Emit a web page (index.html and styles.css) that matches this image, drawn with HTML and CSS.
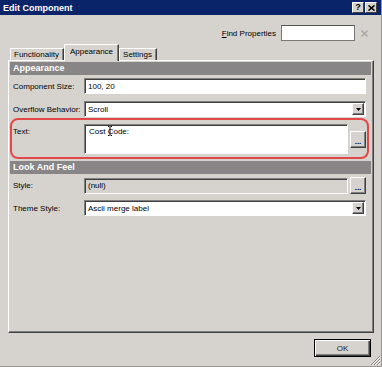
FILE: index.html
```html
<!DOCTYPE html>
<html lang="en">
<head>
  <meta charset="UTF-8" />
  <title>Edit Component</title>
  <link rel="stylesheet" href="styles.css">
</head>
<body>
  <div class="window">
    <div class="titlebar">
      <span class="title">Edit Component</span>
      <div class="caption-btns">
        <span class="cap-btn">?</span>
        <span class="cap-btn">
          <svg width="7" height="6" viewBox="0 0 7 6"><path d="M0.5 0.5 L6.5 5.5 M6.5 0.5 L0.5 5.5" stroke="#000" stroke-width="1.6"/></svg>
        </span>
      </div>
    </div>

    <div class="find-row">
      <span class="find-label"><u>F</u>ind Properties</span>
      <div class="find-input"></div>
      <svg class="find-clear" width="7" height="7" viewBox="0 0 7 7"><path d="M0.5 0.5 L6.5 6.5 M6.5 0.5 L0.5 6.5" stroke="#a9a6a2" stroke-width="1.4"/></svg>
    </div>

    <div class="tabs">
      <div class="tab">Functionality</div>
      <div class="tab active">Appearance</div>
      <div class="tab">Settings</div>
    </div>

    <div class="panel">
      <div class="group-head">Appearance</div>

      <div class="prop first">
        <span class="prop-label">Component Size:</span>
        <div class="field">100, 20</div>
      </div>

      <div class="prop second">
        <span class="prop-label">Overflow Behavior:</span>
        <div class="field combo">
          <span class="combo-text">Scroll</span>
          <span class="drop-btn"><svg width="5" height="3" viewBox="0 0 5 3"><path d="M0 0 H5 L2.5 3 Z" fill="#000"/></svg></span>
        </div>
      </div>

      <div class="prop text-prop">
        <span class="prop-label top">Text:</span>
        <div class="field area">
          Cost Code:
          <svg class="ibeam" width="4" height="10" viewBox="0 0 4 10"><path d="M0 0.5 H1.5 M2.5 0.5 H4 M2 1 V9 M0 9.5 H1.5 M2.5 9.5 H4" stroke="#000" stroke-width="1"/></svg>
        </div>
        <button class="dots-btn">...</button>
      </div>

      <div class="group-head look">Look And Feel</div>

      <div class="prop third">
        <span class="prop-label">Style:</span>
        <div class="field readonly">(null)</div>
        <button class="dots-btn">...</button>
      </div>

      <div class="prop fourth">
        <span class="prop-label">Theme Style:</span>
        <div class="field combo">
          <span class="combo-text">Ascii merge label</span>
          <span class="drop-btn"><svg width="5" height="3" viewBox="0 0 5 3"><path d="M0 0 H5 L2.5 3 Z" fill="#000"/></svg></span>
        </div>
      </div>
    </div>

    <div class="footer">
      <button class="ok-btn">OK</button>
    </div>

    <svg class="grip" width="11" height="11" viewBox="0 0 11 11">
      <path d="M10 1 L1 10 M10 4 L4 10 M10 7 L7 10" stroke="#808080" stroke-width="1"/>
      <path d="M10 2 L2 10 M10 5 L5 10 M10 8 L8 10" stroke="#fff" stroke-width="1"/>
    </svg>
  </div>
</body>
</html>
```

FILE: styles.css
```css
body {
  margin: 0;
  background-color: #d6d3ce;
}

.window {
  position: relative;
  width: 382px;
  height: 367px;
  box-sizing: border-box;
  display: flex;
  flex-direction: column;
  background-color: #d6d3ce;
  border-right: 1px solid #9a9895;
  border-bottom: 1px solid #9a9895;
  font-family: "Liberation Sans", Arial, sans-serif;
  font-size: 8px;
  color: #000;
}

/* title bar */
.titlebar {
  height: 15px;
  flex-shrink: 0;
  display: flex;
  align-items: center;
  justify-content: space-between;
  padding: 0 4px 0 3px;
  background-color: #0a246a;
}

.title {
  color: #fff;
  font-weight: bold;
  font-size: 9px;
}

.caption-btns {
  display: flex;
  gap: 1px;
}

.cap-btn {
  width: 12px;
  height: 11px;
  box-sizing: border-box;
  display: flex;
  align-items: center;
  justify-content: center;
  background-color: #d6d3ce;
  border: 1px solid;
  border-color: #fff #404040 #404040 #fff;
  font-weight: bold;
  font-size: 9px;
  color: #000;
  line-height: 1;
}

/* find */
.find-row {
  height: 26px;
  box-sizing: border-box;
  padding-top: 10px;
  display: flex;
  justify-content: flex-end;
  align-items: center;
  flex-shrink: 0;
}

.find-label {
  margin-right: 5px;
}

.find-input {
  width: 74px;
  height: 16px;
  box-sizing: border-box;
  background-color: #fff;
  border: 1px solid #7a7875;
  border-top-color: #55534f;
}

.find-clear {
  margin: 0 13px 0 6px;
}

/* tabs */
.tabs {
  height: 16px;
  margin-top: 3px;
  padding-left: 10px;
  display: flex;
  align-items: flex-end;
  flex-shrink: 0;
  position: relative;
  z-index: 1;
}

.tab {
  height: 12px;
  box-sizing: border-box;
  padding: 0 4px 0 3px;
  line-height: 12px;
  border: 1px solid;
  border-bottom: none;
  border-color: #fff #404040 transparent #fff;
  box-shadow: inset -1px 0 #808080;
}

.tab.active {
  height: 17px;
  margin-bottom: -1px;
  padding: 0 5px;
  line-height: 13px;
  background-color: #d6d3ce;
}

/* panel */
.panel {
  flex: 1;
  margin: 0 7px 0 8px;
  padding: 1px 2px 0 1px;
  border: 1px solid;
  border-color: #fff #404040 #404040 #fff;
  box-shadow: inset -1px -1px #808080;
}

.group-head {
  height: 13px;
  padding-left: 3px;
  line-height: 13px;
  background-color: #878585;
  color: #fff;
  font-weight: bold;
  font-size: 9px;
}

.group-head.look {
  margin-top: 2px;
}

.prop {
  display: flex;
  align-items: center;
  padding: 0 5px 0 3px;
}

.prop.first { margin-top: 3px; }
.prop.second { margin-top: 7px; }
.prop.third { margin-top: 3px; }
.prop.fourth { margin-top: 6px; }

.prop-label {
  width: 71px;
  flex-shrink: 0;
}

.prop-label.top {
  align-self: flex-start;
  margin-top: 3px;
}

.field {
  flex: 1;
  height: 16px;
  box-sizing: border-box;
  display: flex;
  align-items: center;
  padding-left: 3px;
  background-color: #fff;
  border: 1px solid;
  border-color: #808080 #fff #fff #808080;
  box-shadow: inset 1px 1px #404040;
}

.field.readonly {
  background-color: #d6d3ce;
}

.combo {
  justify-content: space-between;
  padding-right: 1px;
}

.drop-btn {
  width: 12px;
  height: 12px;
  box-sizing: border-box;
  display: flex;
  align-items: center;
  justify-content: center;
  background-color: #d6d3ce;
  border: 1px solid;
  border-color: #fff #404040 #404040 #fff;
  box-shadow: inset -1px -1px #808080;
}

/* text property with the red outline */
.text-prop {
  margin: 1px 2px 0 0;
  padding: 4px 1px 3px 1px;
  border: 2px solid #e34848;
  border-radius: 8px;
}

.field.area {
  position: relative;
  height: 30px;
  align-items: flex-start;
  padding: 2px 4px;
}

.ibeam {
  position: absolute;
  left: 23px;
  top: 1px;
}

.dots-btn {
  width: 16px;
  height: 17px;
  margin-left: 2px;
  padding: 0 0 2px;
  box-sizing: border-box;
  display: flex;
  align-items: flex-end;
  justify-content: center;
  flex-shrink: 0;
  background-color: #d6d3ce;
  border: 1px solid;
  border-color: #fff #404040 #404040 #fff;
  box-shadow: inset -1px -1px #808080;
  font-family: "Liberation Sans", Arial, sans-serif;
  font-size: 8px;
  font-weight: bold;
  line-height: 6px;
  color: #000;
}

/* footer */
.footer {
  height: 33px;
  flex-shrink: 0;
  display: flex;
  justify-content: flex-end;
  align-items: flex-start;
  padding: 6px 10px 0 0;
  box-sizing: border-box;
}

.ok-btn {
  width: 57px;
  height: 18px;
  box-sizing: border-box;
  padding: 0;
  background-color: #d6d3ce;
  border: 1px solid #000;
  box-shadow: inset 1px 1px #fff, inset -1px -1px #404040, inset -2px -2px #808080;
  font-family: "Liberation Sans", Arial, sans-serif;
  font-size: 8px;
  color: #1c1c1c;
}

.grip {
  position: absolute;
  right: 0;
  bottom: 0;
}
```
